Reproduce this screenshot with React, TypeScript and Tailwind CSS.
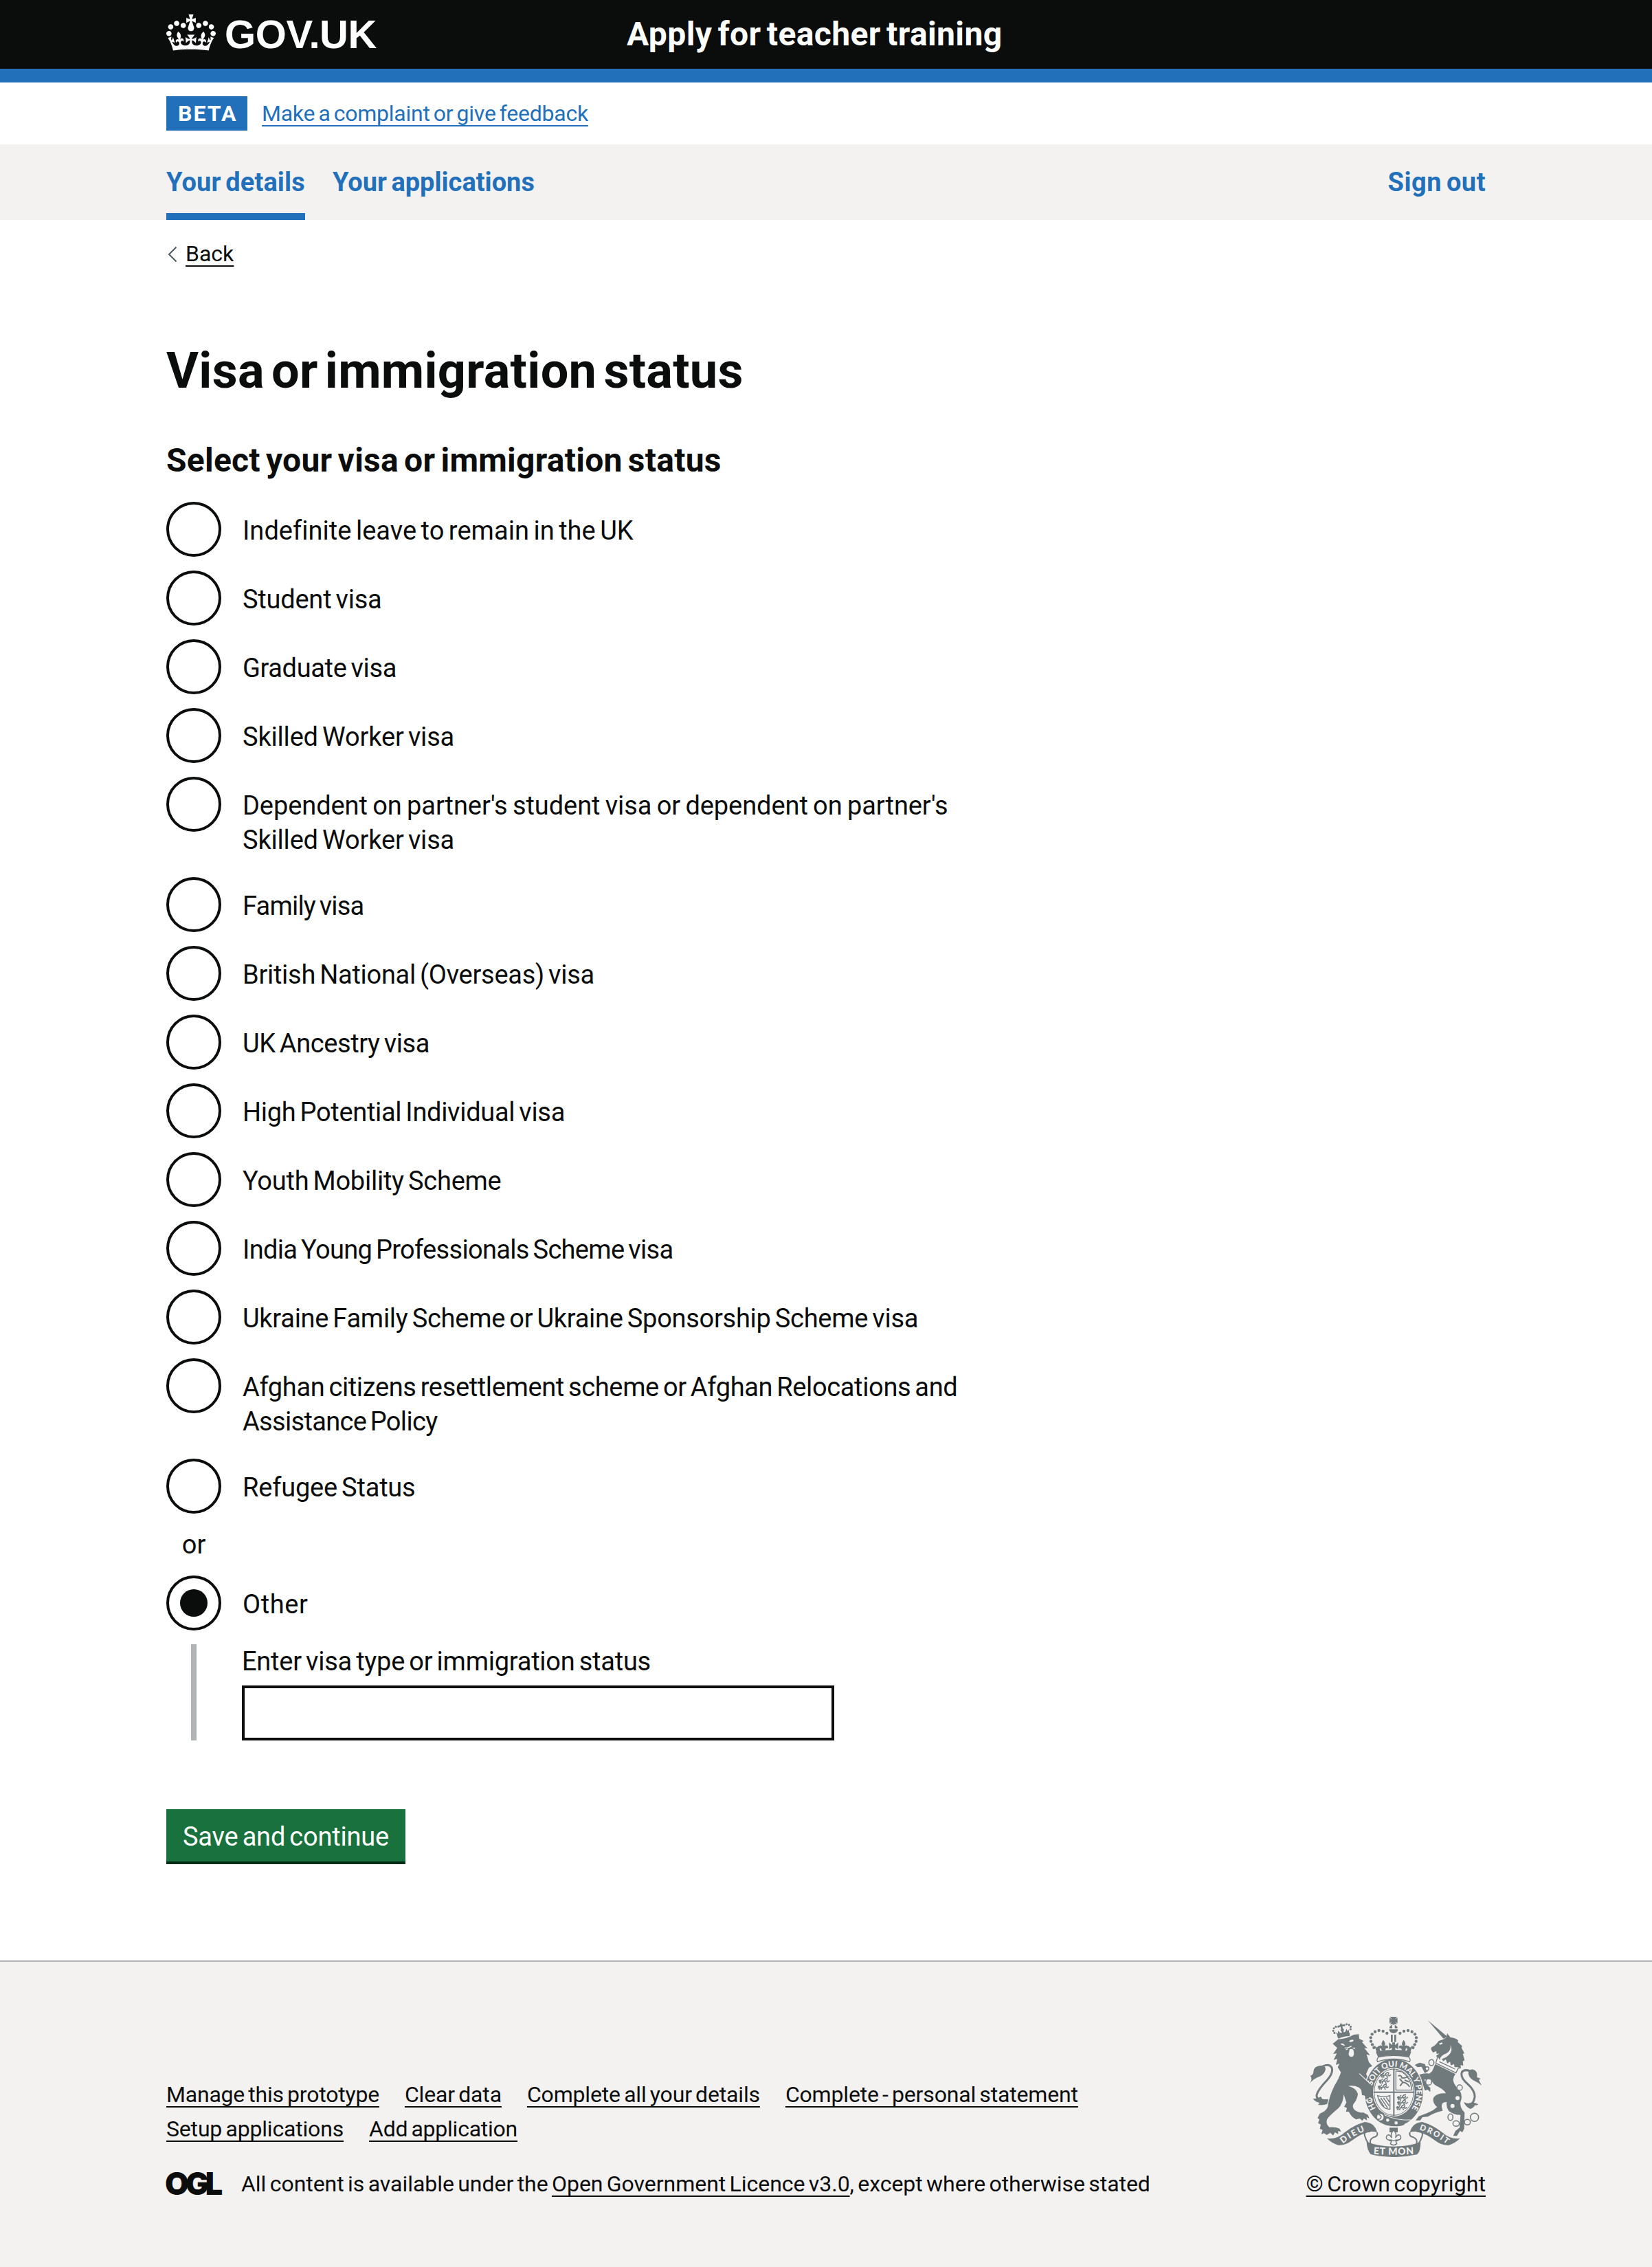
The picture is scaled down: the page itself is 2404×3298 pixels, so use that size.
import type { ReactNode } from "react";

type RadioOption = { label: ReactNode; tracking: string };

const options: RadioOption[] = [
  { label: "Indefinite leave to remain in the UK", tracking: "tracking-[0.03px]" },
  { label: "Student visa", tracking: "tracking-[-0.23px]" },
  { label: "Graduate visa", tracking: "tracking-[-0.36px]" },
  { label: "Skilled Worker visa", tracking: "tracking-[-0.18px]" },
  {
    label: (
      <>
        <span className="tracking-[-0.08px] [word-spacing:-2px]">
          Dependent on partner's student visa or dependent on partner's
        </span>
        <br />
        Skilled Worker visa
      </>
    ),
    tracking: "tracking-[-0.18px]",
  },
  { label: "Family visa", tracking: "tracking-[-0.8px]" },
  { label: "British National (Overseas) visa", tracking: "tracking-[-0.28px]" },
  { label: "UK Ancestry visa", tracking: "tracking-[-0.39px]" },
  { label: "High Potential Individual visa", tracking: "tracking-[-0.31px]" },
  { label: "Youth Mobility Scheme", tracking: "tracking-[-0.25px]" },
  { label: "India Young Professionals Scheme visa", tracking: "tracking-[-0.68px]" },
  { label: "Ukraine Family Scheme or Ukraine Sponsorship Scheme visa", tracking: "tracking-[-0.27px]" },
  {
    label: (
      <>
        <span className="tracking-[-0.36px]">Afghan citizens resettlement scheme or Afghan Relocations and</span>
        <br />
        Assistance Policy
      </>
    ),
    tracking: "tracking-[-0.69px]",
  },
  { label: "Refugee Status", tracking: "tracking-[-0.21px]" },
];

const footerRows = [
  [
    { label: "Manage this prototype", tracking: "tracking-[-0.21px]" },
    { label: "Clear data", tracking: "tracking-[-0.16px]" },
    { label: "Complete all your details", tracking: "tracking-[-0.17px]" },
    { label: "Complete - personal statement", tracking: "tracking-[-0.17px]" },
  ],
  [
    { label: "Setup applications", tracking: "tracking-[-0.18px]" },
    { label: "Add application", tracking: "tracking-[-0.24px]" },
  ],
];

const linkClass =
  "underline decoration-2 underline-offset-[6px] [text-decoration-skip-ink:none]";

function CrownIcon() {
  return (
    <svg viewBox="0 0 132 97" className="mt-px h-[53px] w-[72px]" fill="currentColor" aria-hidden="true">
      <path d="M25 30.2c3.5 1.5 7.7-.2 9.1-3.7 1.5-3.6-.2-7.8-3.9-9.2-3.6-1.4-7.6.3-9.1 3.9-1.4 3.5.3 7.5 3.9 9zM9 39.5c3.6 1.5 7.8-.2 9.2-3.7 1.5-3.6-.2-7.8-3.9-9.1-3.6-1.5-7.6.2-9.1 3.8-1.4 3.5.3 7.5 3.8 9zM4.4 57.2c3.5 1.5 7.7-.2 9.1-3.8 1.5-3.6-.2-7.7-3.9-9.1-3.5-1.5-7.6.3-9.1 3.8-1.4 3.5.3 7.6 3.9 9.1zm38.3-21.4c3.5 1.5 7.7-.2 9.1-3.8 1.5-3.6-.2-7.7-3.9-9.1-3.6-1.5-7.6.3-9.1 3.8-1.3 3.6.4 7.7 3.9 9.1zm64.4-5.6c-3.6 1.5-7.8-.2-9.1-3.7-1.5-3.6.2-7.8 3.8-9.2 3.6-1.4 7.7.3 9.2 3.9 1.3 3.5-.4 7.5-3.9 9zm15.9 9.3c-3.6 1.5-7.7-.2-9.1-3.7-1.5-3.6.2-7.8 3.7-9.1 3.6-1.5 7.7.2 9.2 3.8 1.5 3.5-.3 7.5-3.8 9zm4.7 17.7c-3.6 1.5-7.8-.2-9.2-3.8-1.5-3.6.2-7.7 3.9-9.1 3.6-1.5 7.7.3 9.2 3.8 1.3 3.5-.4 7.6-3.9 9.1zM89.3 35.8c-3.6 1.5-7.8-.2-9.2-3.8-1.4-3.6.2-7.7 3.9-9.1 3.6-1.5 7.7.3 9.2 3.8 1.4 3.6-.3 7.7-3.9 9.1zM69.7 17.7l8.9 4.7V9.3l-8.9 2.8c-.2-.3-.5-.6-.9-.9L72.4 0H59.6l3.5 11.2c-.3.3-.6.5-.9.9l-8.8-2.8v13.1l8.8-4.7c.3.3.6.7.9.9l-5 15.4v.1c-.2.8-.4 1.6-.4 2.4 0 4.1 3.1 7.5 7 8.1h.2c.3 0 .7.1 1 .1.4 0 .7 0 1-.1h.2c4-.6 7.1-4.1 7.1-8.1 0-.8-.1-1.7-.4-2.4V34l-5.1-15.4c.4-.2.7-.6 1-.9zM66 92.8c16.9 0 32.8 1.1 47.1 3.2 4-16.9 8.9-26.7 14-33.5l-9.6-3.4c1 4.9 1.1 7.2 0 10.2-1.5-1.4-3-4.3-4.2-8.7L108.6 76c2.8-2 5-3.2 7.5-3.3-4.4 9.4-10 11.9-13.6 11.2-4.3-.8-6.3-4.6-5.6-7.9 1-4.7 5.7-5.9 8-.5 4.3-8.7-3-11.4-7.6-8.8 7.1-7.2 7.9-13.5 2.1-21.1-8 6.1-8.1 12.3-4.5 20.8-4.7-5.4-12.1-2.5-9.5 6.2 3.4-5.2 7.9-2 7.2 3.1-.6 4.3-6.4 7.8-13.5 7.2-10.3-.9-10.9-8-11.2-13.8 2.5-.5 7.1 1.8 11 7.3L80.2 60c-4.1 4.4-8 5.3-12.3 5.4 1.4-4.4 8-11.6 8-11.6H55.5s6.4 7.2 7.9 11.6c-4.2-.1-8-1-12.3-5.4l1.4 16.4c3.9-5.5 8.5-7.7 10.9-7.3-.3 5.8-.9 12.8-11.1 13.8-7.2.6-12.9-2.9-13.5-7.2-.7-5 3.8-8.3 7.1-3.1 2.7-8.7-4.6-11.6-9.4-6.2 3.7-8.5 3.6-14.7-4.6-20.8-5.8 7.6-5 13.9 2.2 21.1-4.7-2.6-11.9.1-7.7 8.8 2.3-5.5 7.1-4.2 8.1.5.7 3.3-1.3 7.1-5.7 7.9-3.5.7-9-1.8-13.5-11.2 2.5.1 4.7 1.3 7.5 3.3l-4.7-15.4c-1.2 4.4-2.7 7.2-4.3 8.7-1.1-3-.9-5.3 0-10.2l-9.5 3.4c5 6.9 9.9 16.7 14 33.5 14.8-2.1 30.8-3.2 47.7-3.2z" />
    </svg>
  );
}

function Crest() {
  return (
    <svg viewBox="138 102 750 612" className="h-[204px] w-[250px]" fill="#707a7d" aria-hidden="true">
      <defs>
        <path id="garter" d="M440 519A98 114 0 1 1 570 519" />
        <path id="dieu" d="M282 656Q330 618 392 596" />
        <path id="droit" d="M616 594Q680 614 738 660" />
        <path id="mon" d="M400 700Q503 708 608 700" />
        <g id="scrollEnd">
          <path d="M213 633Q258 637 288 608Q332 574 378 561Q420 563 432 606Q418 602 402 603Q360 612 322 642Q292 665 262 662Q236 655 213 633Z" />
          <path d="M402 603Q372 600 378 622Q384 642 394 655M432 606Q438 624 416 628Q396 636 404 660" fill="none" stroke="#707a7d" strokeWidth="6" />
        </g>
        <g id="archSide">
          <circle cx="475" cy="174" r="6.5" />
          <circle cx="458" cy="165" r="6.5" />
          <circle cx="440" cy="162" r="6.5" />
          <circle cx="423" cy="167" r="6.5" />
          <circle cx="410" cy="178" r="6.5" />
          <circle cx="404" cy="193" r="6.5" />
          <circle cx="405" cy="209" r="6.5" />
          <circle cx="411" cy="223" r="6.5" />
          <circle cx="418" cy="237" r="6.5" />
          <path d="M459 203Q472 218 463 230Q474 222 480 232Q482 242 470 240L466 250H452L449 240Q436 242 439 232Q445 222 456 230Q446 218 459 203Z" />
          <path d="M420 226L430 236L440 228L446 252L430 256Z" />
        </g>
        <g id="passant">
          <path d="M0 8Q3 1 9 4Q10 8 16 8L30 6Q38 4 36 -2M10 10L6 18M16 10L14 18M28 9L32 18M8 5L2 14M20 6Q26 -6 38 -6M34 8Q42 12 46 4M12 2L16 -4" fill="none" stroke="#707a7d" strokeWidth="4.5" />
          <circle cx="5" cy="5" r="4" />
        </g>
      </defs>

      {/* lion: tail, crown, body */}
      <path d="M138 393Q152 372 140 360Q156 354 154 340Q156 318 184 315Q206 314 207 330Q204 352 182 362Q156 370 138 393Z" />
      <path d="M190 320Q222 304 234 324Q242 348 212 380Q170 424 168 446Q168 470 218 466" fill="none" stroke="#707a7d" strokeWidth="9" />
      <path d="M152 460Q172 460 186 450Q196 472 218 466L214 482Q196 490 172 486Q184 480 178 476Q162 474 152 460Z" />
      <g transform="rotate(-13 284 178)">
        <path d="M256 178Q284 170 313 178L310 192Q284 186 259 192Z" />
        <path d="M254 162l8 8 3-12 8 12h8l-5-14h16l-5 14h8l8-12 3 12 8-8-5 18H259Z" />
        <circle cx="248" cy="164" r="4.5" />
        <circle cx="245" cy="154" r="4.5" />
        <circle cx="250" cy="144" r="4.5" />
        <circle cx="260" cy="139" r="4.5" />
        <circle cx="271" cy="141" r="4.5" />
        <circle cx="320" cy="164" r="4.5" />
        <circle cx="323" cy="154" r="4.5" />
        <circle cx="318" cy="144" r="4.5" />
        <circle cx="308" cy="139" r="4.5" />
        <circle cx="297" cy="141" r="4.5" />
        <path d="M280 130h8v6h6v8h-6v14h-8v-14h-6v-8h6Z" />
      </g>
      <path d="M238 220L262 200Q300 198 330 180L352 178L354 198L374 208L366 212L390 240L376 238L401 270L386 266L396 300L411 317L396 324L384 352L404 392Q412 410 410 430L406 456L398 466L392 448L384 458L376 440L366 444L366 424L352 410Q330 400 306 404Q340 412 348 438Q346 462 328 484Q322 500 336 510Q352 522 372 520L392 530L398 546L386 540L388 554L374 546L368 556L356 546L340 550Q320 540 308 516L296 516L300 500L288 494L298 476L286 440Q284 480 262 502Q232 526 214 548Q206 570 224 584Q250 582 268 590L275 604L262 600L262 614L248 606L240 620L228 608L212 618L200 610L188 614L194 596L182 590L186 572L174 566L180 550L172 544L182 524Q208 516 216 496Q222 450 246 402Q266 370 274 344L260 322L268 306L252 312L258 286L242 290L256 262L240 264L258 238Z" />
      <path d="M272 220Q284 214 292 228Q280 230 272 220ZM308 210Q318 198 330 204Q326 216 308 210Z" fill="#f3f2f1" />
      <path d="M290 238Q306 240 320 230M296 246L304 242M326 238L336 240" fill="none" stroke="#f3f2f1" strokeWidth="4" />
      <path d="M312 244Q330 238 330 256Q334 276 320 277Q306 276 308 262Z" fill="#f3f2f1" />

      {/* unicorn: horn, head, collar, body, tail */}
      <path d="M653 117L738 188L722 198Z" />
      <path d="M722 200L734 192L738 174L752 192Q776 194 786 206L784 212L804 230L800 236L813 262L806 264L814 292L806 296L808 316L796 312L798 326L780 330L700 292L690 272L704 262L692 264L690 252L676 258L668 246L668 236Q690 226 700 208Z" />
      <path d="M752 224Q756 250 734 262Q712 270 706 286Q728 286 746 268Q764 250 752 224ZM702 218L716 214L718 220L706 224Z" fill="#f3f2f1" />
      <path d="M696 276L706 290L712 278L720 296L732 288L738 306L750 298L754 314L768 308L770 322L790 322L776 348L688 304Z" fill="#f3f2f1" />
      <path d="M696 278L688 304L776 347L788 323M704 298L772 330" fill="none" stroke="#707a7d" strokeWidth="4" />
      <path d="M686 308L774 352Q758 372 768 392Q776 410 794 426Q806 448 796 474Q792 498 814 520L812 590L804 606L794 600L780 622L764 622L774 600L792 586L796 530Q764 530 744 512Q732 494 736 474Q712 472 714 496L718 512Q680 520 654 538L630 540L620 554H600L614 536Q650 524 676 510L694 496Q672 478 678 456Q690 434 732 436Q728 424 700 408Q676 400 668 376L638 376L646 396L664 412L664 430L652 420L640 424L634 404L612 372L606 358Q640 346 660 350L672 340Z" />
      <path d="M596 312L618 302L640 308L654 340L640 348L626 320L608 322Z" />
      <g fill="#f3f2f1" stroke="#707a7d" strokeWidth="4.5">
        <ellipse cx="669" cy="302" rx="11" ry="13" />
        <circle cx="650" cy="328" r="8" />
        <ellipse cx="657" cy="386" rx="13" ry="14" />
        <circle cx="792" cy="411" r="12" />
        <ellipse cx="752" cy="540" rx="11" ry="14" />
        <ellipse cx="777" cy="568" rx="14" ry="12" />
        <ellipse cx="826" cy="562" rx="13" ry="12" />
        <circle cx="857" cy="541" r="18" />
      </g>
      <circle cx="783" cy="457" r="9" fill="#f3f2f1" />
      <circle cx="761" cy="491" r="9" fill="#f3f2f1" />
      <path d="M888 402Q872 388 850 378Q832 366 830 348Q832 330 852 332Q872 338 868 366L884 372L876 378Z" />
      <path d="M842 340Q812 328 802 344Q794 366 826 394Q860 424 858 452Q854 484 832 484" fill="none" stroke="#707a7d" strokeWidth="9" />
      <path d="M810 474Q832 486 848 474L874 484Q866 490 858 488Q854 500 838 504Q818 494 810 474Z" />

      {/* garter and shield */}
      <ellipse cx="505" cy="433" rx="131" ry="151" fill="#f3f2f1" />
      <ellipse cx="505" cy="433" rx="127" ry="147" />
      <ellipse cx="505" cy="431" rx="91" ry="106" fill="#f3f2f1" />
      <ellipse cx="505" cy="431" rx="86" ry="101" fill="none" stroke="#707a7d" strokeWidth="3" />
      <path d="M505 328V535M416 431H594" stroke="#707a7d" strokeWidth="6" />
      <text fill="#f3f2f1" className="font-['Lato'] text-[35px] font-black">
        <textPath href="#garter" startOffset="22">HO</textPath>
      </text>
      <text fill="#f3f2f1" className="font-['Lato'] text-[35px] font-black">
        <textPath href="#garter" startOffset="124" textLength="376">SOIT QUI MAL Y PENSE</textPath>
      </text>
      <use href="#passant" x="446" y="350" />
      <use href="#passant" x="440" y="376" />
      <use href="#passant" x="436" y="402" />
      <use href="#passant" x="520" y="448" />
      <use href="#passant" x="520" y="470" />
      <use href="#passant" x="516" y="492" />
      <path d="M514 338V422H584Q578 366 540 342Z" fill="none" stroke="#707a7d" strokeWidth="4" />
      <path d="M524 360Q536 354 540 368Q556 372 566 362M530 372L544 388L532 404M544 388Q560 388 574 408M552 378L570 386" fill="none" stroke="#707a7d" strokeWidth="6" />
      <path d="M434 446Q460 456 488 446V506Q448 504 434 446ZM448 456L478 500M460 456L484 490M472 454L486 474M442 462L462 494" fill="none" stroke="#707a7d" strokeWidth="4" />
      <path d="M446 512Q462 520 470 534Q520 552 560 544L550 574Q510 590 450 560Z" />
      <path d="M462 530Q520 556 580 552" fill="none" stroke="#f3f2f1" strokeWidth="3" />
      <circle cx="446" cy="540" r="17" fill="#f3f2f1" stroke="#707a7d" strokeWidth="5" />
      <path d="M438 528Q456 534 446 546Q440 552 432 548" fill="none" stroke="#707a7d" strokeWidth="5" />
      <circle cx="478" cy="553" r="7" fill="#f3f2f1" />
      <circle cx="515" cy="565" r="7" fill="#f3f2f1" />
      {/* forepaw over the garter */}
      <path d="M352 350L400 392Q412 412 410 432L412 458L400 450L392 462L380 446L366 444L360 400Z" />
      <path d="M354 350L404 396M380 464L394 470L412 462" fill="none" stroke="#f3f2f1" strokeWidth="3.5" />

      {/* royal crown */}
      <use href="#archSide" />
      <use href="#archSide" transform="translate(1007 0) scale(-1 1)" />
      <path d="M488 102H519L510 114L521 106V131L510 122L519 134H488L497 122L486 131V106L497 114Z" />
      <path d="M498 138H509V152H522Q520 140 503 136Q486 140 485 152H498ZM484 157H523Q522 172 503 174Q486 172 484 157ZM492 180H500V212H492ZM507 180H515V212H507Z" />
      <path d="M484 214L498 226V214H510V226L524 214V244L510 236L512 250H495L497 236L484 244Z" />
      <path d="M426 254Q503 238 581 254L572 278Q503 264 436 278Z" />
      <path d="M438 278Q503 264 570 278Q580 286 574 298Q540 286 503 286Q466 286 434 298Q428 286 438 278Z" fill="#f3f2f1" stroke="#707a7d" strokeWidth="4" />

      {/* motto scroll and pendant */}
      <use href="#scrollEnd" />
      <use href="#scrollEnd" transform="translate(1007 0) scale(-1 1)" />
      <path d="M386 648Q440 668 505 668Q570 668 622 648Q622 690 606 703Q555 714 503 714Q440 712 404 702Q388 684 386 648Z" />
      <g fill="#f3f2f1" className="font-['Lato'] font-black">
        <text className="text-[38px]"><textPath href="#dieu" textLength="112">DIEU</textPath></text>
        <text className="text-[35px]"><textPath href="#droit" textLength="136">DROIT</textPath></text>
        <text className="text-[42px]"><textPath href="#mon" startOffset="16" textLength="176">ET MON</textPath></text>
      </g>
      <path d="M486 586H522V606H486Z" />
      <path d="M504 596Q520 612 512 630Q524 610 534 622Q540 638 522 640H514V646L518 656Q504 668 490 656L494 646V640H484Q468 638 474 622Q484 610 496 630Q488 612 504 596Z" fill="#f3f2f1" stroke="#707a7d" strokeWidth="4.5" />
      <path d="M484 643H524" stroke="#707a7d" strokeWidth="4" />
    </svg>
  );
}

function Container({ className, children }: { className: string; children: ReactNode }) {
  return <div className={`mx-auto w-[1920px] ${className}`}>{children}</div>;
}

function Radio({ label, tracking, checked = false }: RadioOption & { checked?: boolean }) {
  return (
    <label className="mb-5 flex min-h-20 items-start">
      <span className="flex size-20 shrink-0 items-center justify-center rounded-full border-4 border-[#0b0c0c] bg-white">
        {checked && <span className="size-10 rounded-full bg-[#0b0c0c]" />}
      </span>
      <span className={`pt-[17px] pb-[9px] pl-[31px] leading-[50px] [word-spacing:-3px] ${tracking}`}>
        {label}
      </span>
    </label>
  );
}

export default function App() {
  return (
    <div className="flex min-h-[3298px] flex-col bg-white font-['Roboto',sans-serif] text-[38px] text-[#0b0c0c]">
      <header className="h-[120px] border-b-20 border-[#2270b9] bg-[#0b0c0c] text-white">
        <Container className="flex pt-5">
          <a className="flex w-[670px] items-start">
            <CrownIcon />
            <span className="ml-[13px] font-['Liberation_Sans'] text-[58px] leading-[60px] font-bold tracking-[-0.4px]">
              GOV.UK
            </span>
          </a>
          <span className="text-[48px] leading-[60px] font-bold tracking-[0.38px] [word-spacing:-4px]">
            Apply for teacher training
          </span>
        </Container>
      </header>

      <Container className="flex h-[90px] pt-5 text-[32px] leading-[50px]">
        <strong className="h-[50px] w-[118px] bg-[#2270b9] pl-[17px] tracking-[2px] text-white">BETA</strong>
        <a className={`ml-[21px] tracking-[-0.25px] text-[#2270b9] [word-spacing:-2.5px] ${linkClass}`}>
          Make a complaint or give feedback
        </a>
      </Container>

      <nav className="bg-[#f3f2f1] font-bold text-[#2270b9]">
        <Container className="flex h-[110px] leading-[50px] [word-spacing:-3px]">
          <a className="border-b-10 border-[#2270b9] pt-[30px] tracking-[0.15px]">Your details</a>
          <a className="ml-10 pt-[30px]">Your applications</a>
          <a className="ml-auto pt-[30px] tracking-[0.5px]">Sign out</a>
        </Container>
      </nav>

      <Container className="flex-1">
        <a className="mt-[29px] flex h-10 items-start text-[32px] leading-10">
          <svg viewBox="0 0 14 24" className="mt-[9px] ml-0.5 h-6 w-3.5" fill="none" stroke="#505a5f" strokeWidth="2">
            <path d="M12.5 1.5L2 12L12.5 22.5" />
          </svg>
          <span className={`ml-3 ${linkClass}`}>Back</span>
        </a>

        <main className="pt-[111px]">
          <h1 className="text-[72px] leading-20 font-bold tracking-[0.3px] [word-spacing:-8px]">
            Visa or immigration status
          </h1>
          <h2 className="mt-[60px] mb-[30px] text-[48px] leading-[60px] font-bold tracking-[0.25px] [word-spacing:-4px]">
            Select your visa or immigration status
          </h2>

          {options.map((option, index) => (
            <Radio key={index} {...option} />
          ))}
          <div className="mb-5 w-20 pt-px text-center leading-[49px]">or</div>
          <Radio label="Other" tracking="tracking-[0.6px]" checked />

          <div className="ml-9 flex h-[140px] flex-col border-l-8 border-[#b1b4b6] pl-[66px]">
            <label className="pt-px leading-[49px] tracking-[-0.24px] [word-spacing:-3px]">
              Enter visa type or immigration status
            </label>
            <input className="mt-2.5 h-20 w-[862px] border-4 border-[#0b0c0c] bg-white" />
          </div>

          <button className="mt-[100px] flex h-20 w-[348px] justify-center border-b-4 border-[#002d18] bg-[#19713d] pt-[21px] leading-[38px] tracking-[-0.21px] text-white [word-spacing:-3px]">
            Save and continue
          </button>
        </main>
      </Container>

      <footer className="h-[446px] border-t-2 border-[#b1b4b6] bg-[#f3f2f1] text-[32px] leading-10">
        <Container className="flex justify-between">
          <div className="pt-[173px] [word-spacing:-2.5px]">
            {footerRows.map((row, index) => (
              <div key={index} className="mb-2.5 flex gap-[37px]">
                {row.map((link) => (
                  <a key={link.label} className={`${linkClass} ${link.tracking}`}>
                    {link.label}
                  </a>
                ))}
              </div>
            ))}
            <div className="mt-10 flex">
              <span className="-ml-0.5 w-[111px] font-['Inter'] text-[45px] font-black tracking-[-5px]">OGL</span>
              <span className="tracking-[-0.04px]">
                All content is available under the <a className={linkClass}>Open Government Licence v3.0</a>, except
                where otherwise stated
              </span>
            </div>
          </div>
          <div className="flex flex-col items-center pt-20">
            <Crest />
            <a className={`mt-[19px] tracking-[0.09px] [word-spacing:-2.5px] ${linkClass}`}>© Crown copyright</a>
          </div>
        </Container>
      </footer>
    </div>
  );
}
